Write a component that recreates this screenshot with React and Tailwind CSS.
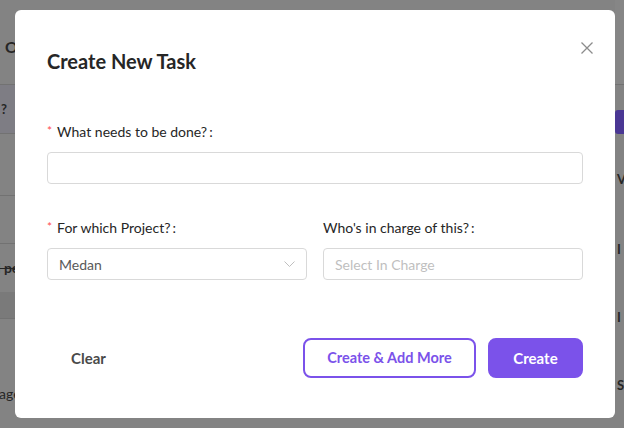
import React from "react";

function BgLeft() {
  return (
    <div className="w-[15px] shrink-0 flex flex-col overflow-hidden">
      <div className="h-[84px] flex items-center pt-[10px] pl-[5px]">
        <span className="text-[16px] font-bold text-[#262626] leading-none">O</span>
      </div>
      <div className="h-px bg-[#727272]" />
      <div className="h-[48px] bg-[#7e7d84] flex items-center pl-[1px]">
        <span className="text-[13px] font-bold text-[#262626] leading-none">?</span>
      </div>
      <div className="h-px bg-[#727272]" />
      <div className="h-[61px]" />
      <div className="h-px bg-[#727272]" />
      <div className="h-[47px]" />
      <div className="h-px bg-[#727272]" />
      <div className="h-[48px] flex items-center">
        <span className="ml-[-3px] whitespace-nowrap text-[14px] font-bold text-[#262626] line-through leading-none">l pe</span>
      </div>
      <div className="h-[26px] bg-[#7a7a7a]" />
      <div className="h-px bg-[#727272]" />
      <div className="flex-1 flex items-start pt-[68px]">
        <span className="ml-[-1px] whitespace-nowrap text-[14px] text-[#262626] leading-none">age</span>
      </div>
    </div>
  );
}

function BgRight() {
  return (
    <div className="w-[9px] shrink-0 flex flex-col overflow-hidden">
      <div className="h-[84px] bg-[#868686]" />
      <div className="h-px bg-[#727272]" />
      <div className="h-[25px]" />
      <div className="h-[24px] bg-[#4a3794] rounded-l-[3px]" />
      <div className="h-[38px]" />
      <div className="h-[14px] flex items-center pl-[2px]">
        <span className="text-[13px] font-bold text-[#262626] leading-none">V</span>
      </div>
      <div className="h-[56px]" />
      <div className="h-[14px] flex items-center pl-[2px]">
        <span className="text-[13px] font-bold text-[#262626] leading-none">I</span>
      </div>
      <div className="h-[54px]" />
      <div className="h-[14px] flex items-center pl-[2px]">
        <span className="text-[13px] font-bold text-[#262626] leading-none">I</span>
      </div>
      <div className="h-[54px]" />
      <div className="h-[14px] flex items-center pl-[2px]">
        <span className="text-[13px] font-bold text-[#262626] leading-none">S</span>
      </div>
    </div>
  );
}

function Label({ children, required }) {
  return (
    <div className="h-[22px] leading-[22px] text-[14px] text-[#262626] flex items-center">
      {required && (
        <span className="text-[#ff4d4f] text-[12px] mr-[5px] leading-none translate-y-[-1px]">*</span>
      )}
      <span>{children}</span>
      <span className="ml-[2px]">:</span>
    </div>
  );
}

export default function App() {
  return (
    <div className="relative w-[624px] h-[428px] overflow-hidden bg-[#838383] font-['Lato','Noto_Sans',sans-serif]">
      <div className="flex h-full">
        <BgLeft />
        <div className="flex-1" />
        <BgRight />
      </div>

      <div className="absolute left-[15px] top-[10px] w-[600px] h-[408px] bg-white rounded-[6px] px-8 pt-[37px] flex flex-col">
        <button className="absolute top-[32px] right-[22px] w-[12px] h-[12px]">
          <svg width="12" height="12" viewBox="0 0 12 12" fill="none">
            <path d="M0.5 0.5L11.5 11.5M11.5 0.5L0.5 11.5" stroke="#8c8c8c" strokeWidth="1.3" />
          </svg>
        </button>

        <h2 className="h-[28px] leading-[28px] text-[20px] font-bold text-[#262626]">Create New Task</h2>

        <div className="mt-[46px]">
          <Label required>What needs to be done?</Label>
          <div className="mt-[9px] h-[32px] border border-[#d9d9d9] rounded-[4px]" />
        </div>

        <div className="mt-[33px] grid grid-cols-2 gap-4">
          <div>
            <Label required>For which Project?</Label>
            <div className="mt-[9px] h-[32px] border border-[#d9d9d9] rounded-[4px] px-[11px] flex items-center justify-between">
              <span className="text-[14px] text-[#595959]">Medan</span>
              <svg width="11" height="6" viewBox="0 0 11 6" fill="none">
                <path d="M0.5 0.5L5.5 5.5L10.5 0.5" stroke="#bfbfbf" strokeWidth="1" />
              </svg>
            </div>
          </div>
          <div>
            <Label>Who's in charge of this?</Label>
            <div className="mt-[9px] h-[32px] border border-[#d9d9d9] rounded-[4px] px-[11px] flex items-center">
              <span className="text-[14px] text-[#bfbfbf]">Select In Charge</span>
            </div>
          </div>
        </div>

        <div className="mt-[58px] flex items-center justify-between">
          <button className="h-[40px] px-6 text-[15px] font-bold text-[#4a4a4a]">Clear</button>
          <div className="flex gap-3">
            <button className="h-[40px] w-[173px] border-2 border-[#7b52ea] rounded-lg text-[14.5px] font-bold text-[#7b52ea] bg-white">
              Create &amp; Add More
            </button>
            <button className="h-[40px] w-[95px] border-2 border-[#7b52ea] rounded-lg text-[15px] font-bold text-white bg-[#7b52ea]">
              Create
            </button>
          </div>
        </div>
      </div>
    </div>
  );
}
